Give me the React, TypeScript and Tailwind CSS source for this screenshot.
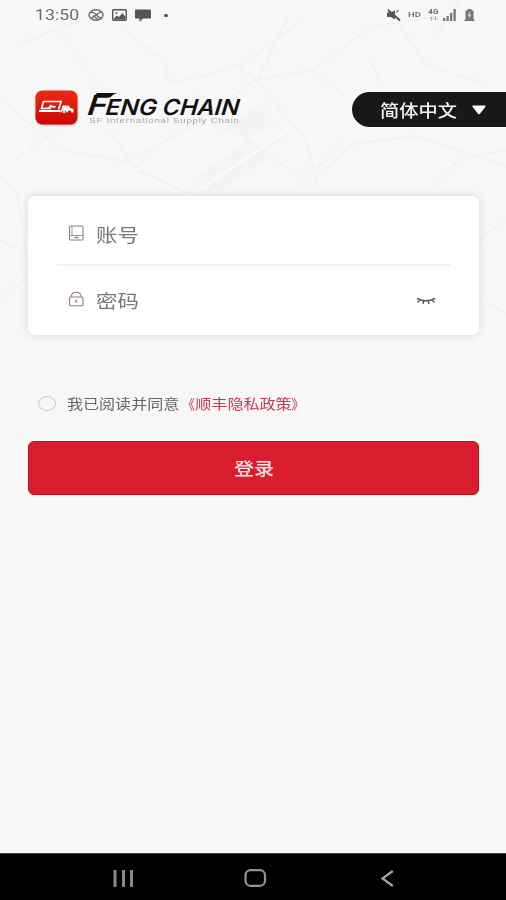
import { useState } from "react";

function StreetTexture() {
  return (
    <svg
      className="absolute inset-x-0 top-0 h-[360px] w-full"
      viewBox="0 0 506 360"
      fill="none"
    >
      <path d="M222 130l40-28 14 22-30 14zM190 180l60-40 20 18-50 32z" fill="#f4f4f4" />
      <g stroke="#f2f2f2" strokeWidth="2">
        <path d="M0 98l60 52 70 12 60-36 68-48 30-60M120 26l44 34 6 24 70-18 62-46" />
        <path d="M0 174l18 22 8 60M14 160l60-42M110 130l24 38 50-28M134 168l64 30 92-66" />
        <path d="M236 64l20 16 50 60 12 46M256 80l56-10 60-44 70-10M312 70l34 26" />
        <path d="M306 186l48-42 60-8 92 30M290 196l54-56M420 200l40-42 46-8M242 136l60 42" />
        <path d="M400 26l26 38 60 20M460 0l-28 40M60 30l40 60M20 44l60-24M480 240l26-22M484 300l22 14" />
        <path d="M0 300l28-24M0 240l26 14M198 92l20 38M370 60l16 34" />
      </g>
      <g stroke="#f9f9f9" strokeWidth="3">
        <path d="M0 128l50 44 74 6 80-52M140 40l50 20 60-34M190 196l104-70" />
        <path d="M300 150l60-50M330 190l50-40 70 14M440 80l60-40" />
      </g>
    </svg>
  );
}

function StatusBar() {
  return (
    <div className="flex h-[30px] items-center justify-between pl-[35px] pr-[31px] text-[#6b6b6b]">
      <div className="flex items-center">
        <span className="w-[53px] pt-px font-['Roboto'] text-[15px] leading-none">
          <span className="inline-block origin-left scale-x-[1.18]">13:50</span>
        </span>
        <svg width="16" height="12" viewBox="0 0 16 12" fill="none" stroke="currentColor" strokeWidth="1.4">
          <ellipse cx="8" cy="6" rx="7" ry="5.2" />
          <path d="M3 9.500L13 2.500M2.500 3.500c4-.5 5 1 6.500 3s3 2.500 4.500 2M5 6.500l5 4" />
        </svg>
        <svg className="ml-[8px]" width="15" height="12" viewBox="0 0 15 12">
          <rect x=".7" y=".7" width="13.600" height="10.600" rx="1" fill="none" stroke="#555" strokeWidth="1.400" />
          <path d="M2 9.500l3-3 2 1.500 3.500-4 3 4v2.500H2z" fill="#555" />
          <circle cx="4.500" cy="4" r="1" fill="#555" />
        </svg>
        <svg className="ml-[8px]" width="16" height="13" viewBox="0 0 16 13" fill="#555">
          <path d="M1 .5h14q1 0 1 1v7q0 1-1 1H8L4.500 13V9.500H1q-1 0-1-1v-7q0-1 1-1z" />
        </svg>
        <span className="ml-[13px] h-[3px] w-[4px] rounded-full bg-[#555]" />
      </div>

      <div className="flex items-center">
        <svg className="-ml-[2px] mr-[2px]" width="14" height="12" viewBox="0 0 14 12" fill="#555" stroke="#555">
          <path d="M0 3.500h3.500l4.500-2v9L4 8H0z" stroke="none" />
          <path d="M1 1l12 10.500" strokeWidth="2" />
          <path d="M9.500 3.500l2-2.500" strokeWidth="1.200" />
        </svg>
        <span className="ml-[5px] w-[13px] font-['Roboto'] text-[8px] font-medium leading-none">
          <span className="inline-block origin-left scale-x-[1.18]">HD</span>
        </span>
        <span className="ml-[7px] flex w-[11px] flex-col items-center font-['Roboto'] text-[7px] font-bold leading-[7px]">
          <span className="scale-x-[1.15]">4G</span>
          <svg width="9" height="5" viewBox="0 0 9 5" fill="none" stroke="#999">
            <path d="M2.500 5V1M1 2.500L2.500 1 4 2.500M6.500 0v4M5 2.500L6.500 4 8 2.500" strokeWidth=".8" />
          </svg>
        </span>
        <svg className="ml-[4px]" width="13" height="12" viewBox="0 0 13 12" fill="#777">
          <path d="M0 9h2.300v3H0zM3.500 7h2.300v5H3.500zM7 4h2.300v8H7zM10.500 0h2.300v12h-2.300z" />
        </svg>
        <svg className="ml-[8px]" width="11" height="12" viewBox="0 0 10 12">
          <path d="M3 0h4v1.500h2v9h1V12H0v-1.500h1v-9h2z" fill="#777" />
          <path d="M5.500 2.500L3 6.500h1.700L4.200 9.500 7 5.700H5.300z" fill="#ddd" />
        </svg>
      </div>
    </div>
  );
}

function Logo() {
  return (
    <div className="flex items-start">
      <svg
        className="drop-shadow-[0_1px_1px_rgba(0,0,0,0.25)]"
        width="43"
        height="35"
        viewBox="0 0 43 35"
      >
        <defs>
          <linearGradient id="badge" x1="0" y1="0" x2="0" y2="1">
            <stop offset="0" stopColor="#f02a10" />
            <stop offset="1" stopColor="#cb0606" />
          </linearGradient>
        </defs>
        <rect x=".5" y=".5" width="42" height="34" rx="7" fill="url(#badge)" />
        <path d="M16 18.500H6.500l2-7H26l-2.500 8" fill="none" stroke="#fff" strokeWidth="1.700" />
        <path d="M4 20h21.500v2H4z" fill="#fff" />
        <path d="M11 17.500l3-1 1.500-2 2.500 1.300 3 .2-1 1.800z" fill="#fff" />
        <path d="M27.500 15.500h6l2 2.500 3 1v3.500h-2a2 2 0 0 0-4 0h-1a2.600 2.600 0 0 0-5 0h-1z" fill="#fff" />
        <circle cx="29" cy="22" r="1.200" fill="#fff" />
      </svg>
      <div className="ml-[10px] w-[154px]">
        <div className="relative h-[26px] whitespace-nowrap font-['Inter'] font-semibold italic text-[#111]">
          <div className="flex h-[26px] items-baseline pt-px leading-[28px]">
            <span className="w-[18px] text-[28px]">
              <span className="inline-block origin-left scale-x-[1.2] -skew-x-6">F</span>
            </span>
            <span className="w-[57px] text-[22px]">
              <span className="inline-block origin-left scale-x-[1.1] -skew-x-6">ENG</span>
            </span>
            <span className="text-[22px]">
              <span className="inline-block origin-left scale-x-[1.07] -skew-x-6">CHAIN</span>
            </span>
          </div>
          <svg className="absolute left-[6px] top-[2px]" width="24" height="6" viewBox="0 0 24 6" fill="#111">
            <path d="M3 1h21q-5 .8-7.500 4.500L13 3.500H1z" />
          </svg>
        </div>
        <div className="h-[9px] whitespace-nowrap font-['Liberation_Sans'] text-[8px] leading-[9px] text-[#a5a5a5]">
          <span className="inline-block origin-left scale-x-[1.2] pl-px tracking-[0.66px]">
            SF International Supply Chain
          </span>
        </div>
      </div>
    </div>
  );
}

function LanguageButton() {
  return (
    <button
      type="button"
      className="mt-[2px] flex h-[35px] w-[154px] items-center rounded-l-full bg-[#181818] pl-[28px] text-[17px] text-[#f2f2f2]"
    >
      <span className="w-[92px] text-left">
        <span className="inline-block origin-left scale-x-[1.13] font-medium">简体中文</span>
      </span>
      <svg width="14" height="10" viewBox="0 0 14 10" fill="#fff">
        <path d="M1 .5h12q1 .3.500 1.200L8 8.800q-1 1-2 0L.500 1.700Q0 .8 1 .5z" />
      </svg>
    </button>
  );
}

function AccountIcon() {
  return (
    <svg width="16" height="16" viewBox="0 0 16 16" fill="none" stroke="#8c8080" strokeWidth="1.100">
      <rect x="1.500" y="1" width="13.500" height="14" rx=".8" />
      <path d="M4 1v9.500M1.500 10.500H15" strokeWidth=".8" />
      <path d="M6.500 12.500h4" stroke="#d8506a" strokeWidth="1.300" />
    </svg>
  );
}

function LockIcon() {
  return (
    <svg width="16" height="16" viewBox="0 0 16 16" fill="none" stroke="#8c8080" strokeWidth="1.100">
      <rect x="1.500" y="6" width="13.500" height="8.700" rx="1" />
      <path d="M3 6c.5-3 2.500-4.700 5.200-4.700S13 3 13.500 6" />
      <path d="M8.200 8.700v3" stroke="#d8506a" strokeWidth="1.300" />
    </svg>
  );
}

export default function App() {
  const [agreed, setAgreed] = useState(false);

  return (
    <div className="relative flex h-[900px] w-[506px] flex-col overflow-hidden bg-[#f7f7f7] font-['Noto_Sans_CJK_SC',sans-serif]">
      <StreetTexture />

      <div className="relative flex flex-1 flex-col">
        <StatusBar />

        <header className="mt-[60px] flex h-[106px] items-start justify-between pl-[35px]">
          <Logo />
          <LanguageButton />
        </header>

        <main className="pl-[28px] pr-[27px]">
          <div className="h-[139px] rounded-[7px] bg-white px-[29px] shadow-[0_0_9px_rgba(0,0,0,0.12)]">
            <div className="flex h-[70px] items-center border-b-2 border-[#f1f1f1] pl-[11px] pt-[8px] text-[18px] text-[#777]">
              <span className="-mt-[3px]">
                <AccountIcon />
              </span>
              <span className="ml-[12px] inline-block origin-left scale-x-[1.19]">
                账号
              </span>
            </div>
            <div className="flex h-[69px] items-center pl-[11px] text-[18px] text-[#777]">
              <span className="-mt-[3px]">
                <LockIcon />
              </span>
              <span className="-mt-px ml-[12px] inline-block origin-left scale-x-[1.19]">
                密码
              </span>
              <svg
                className="ml-auto mr-[14px]"
                width="20"
                height="8"
                viewBox="0 0 20 8"
                fill="none"
                stroke="#555"
                strokeWidth="1.400"
              >
                <path d="M1 1.500q9 4.500 18 0M4 3L1.500 5.500M7.800 4L7 7M12.200 4l.8 3M16 3l2.500 2.500" />
              </svg>
            </div>
          </div>

          <div className="mt-[57px] flex h-[22px] items-center pl-[10px] text-[13.6px] text-[#666]">
            <button
              type="button"
              aria-pressed={agreed}
              onClick={() => setAgreed(!agreed)}
              className={`h-[15px] w-[18px] rounded-[50%] border border-[#cfcfcf] ${
                agreed ? "bg-[#d91d2f]" : "bg-transparent"
              }`}
            />
            <span className="ml-[11px] inline-block origin-left scale-x-[1.18] whitespace-nowrap">
              我已阅读并同意
              <span className="text-[#c23a55]">
                <span className="inline-block origin-right scale-x-[0.85]">《</span>
                顺丰隐私政策
                <span className="inline-block origin-left scale-x-[0.85]">》</span>
              </span>
            </span>
          </div>

          <button
            type="button"
            className="mt-[27px] flex h-[54px] w-full items-center justify-center rounded-[6px] border border-[#c8101f] bg-[#d91d2f] text-[17px] text-[#fbe4e6]"
          >
            <span className="scale-x-[1.18] font-medium">登录</span>
          </button>
        </main>
      </div>

      <nav className="relative flex h-[47px] items-center border-t border-[#444] bg-black pl-[113px] pt-[2px]">
        <svg width="21" height="17" viewBox="0 0 21 17" fill="#8a8a8a">
          <path d="M.5 0h3v17h-3zM9 0h3v17H9zM17 0h3v17h-3z" />
        </svg>
        <svg className="ml-[110px]" width="23" height="18" viewBox="0 0 23 18" fill="none" stroke="#949494" strokeWidth="2.200">
          <rect x="1.500" y="1.200" width="19.500" height="15.600" rx="5" />
        </svg>
        <svg className="ml-[114px]" width="13" height="17" viewBox="0 0 13 17" fill="none" stroke="#a5a5a5" strokeWidth="2.200">
          <path d="M11.800 1L1.500 8.500l10.300 7.500" />
        </svg>
      </nav>
    </div>
  );
}
